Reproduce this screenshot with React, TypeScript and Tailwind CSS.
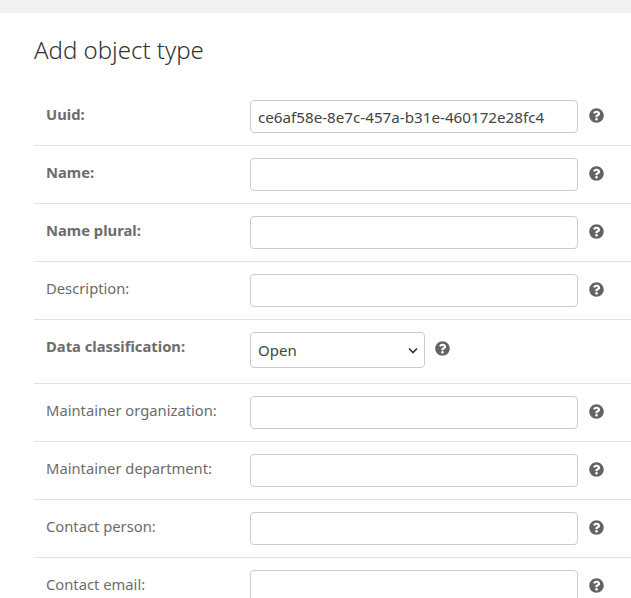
import React from 'react';
import { FaQuestionCircle } from 'react-icons/fa';

const fields = [
  { label: 'Uuid:', required: true, value: 'ce6af58e-8e7c-457a-b31e-460172e28fc4' },
  { label: 'Name:', required: true },
  { label: 'Name plural:', required: true },
  { label: 'Description:' },
  { label: 'Data classification:', required: true, select: true },
  { label: 'Maintainer organization:' },
  { label: 'Maintainer department:' },
  { label: 'Contact person:' },
  { label: 'Contact email:' },
];

function Help() {
  return <FaQuestionCircle className="w-[15px] h-[15px] text-[#636363] shrink-0" />;
}

function Row({ field }: { field: (typeof fields)[number] }) {
  return (
    <div className="flex border-b border-[#e2e2e2] pl-3 py-3">
      <label
        className={
          'w-[204px] shrink-0 pt-[4px] text-[14.75px] leading-[20px] text-[#6c6c6c] ' +
          (field.required ? 'font-bold' : '')
        }
      >
        {field.label}
      </label>
      {field.select ? (
        <div className="flex items-start gap-[10px] pb-[3px]">
          <div className="w-[175px] h-[36px] border border-[#cccccc] rounded-[4px] flex items-center justify-between pl-[7px] pr-[6px] text-[15px] text-[#444444]">
            <span>Open</span>
            <svg width="10" height="7" viewBox="0 0 10 7" fill="none">
              <path d="M1 1.5l4 4 4-4" stroke="#333333" strokeWidth="1.6" />
            </svg>
          </div>
          <div className="pt-[9px]">
            <Help />
          </div>
        </div>
      ) : (
        <div className="flex items-center gap-[11px]">
          <input
            readOnly
            value={field.value ?? ''}
            className="w-[328px] h-[33px] border border-[#cccccc] rounded-[4px] px-[7px] text-[15.2px] text-[#444444] outline-none bg-white"
          />
          <div className="mb-[2px]">
            <Help />
          </div>
        </div>
      )}
    </div>
  );
}

export default function App() {
  return (
    <div className="h-[598px] overflow-hidden bg-white font-['Noto_Sans','Open_Sans',sans-serif]">
      <div className="h-[13px] bg-[#f2f2f2]" />
      <div className="pl-[34px]">
        <h1 className="pt-[20px] h-[75px] text-[24px] leading-[33px] font-light text-[#333333]">
          Add object type
        </h1>
        {fields.map(f => (
          <Row key={f.label} field={f} />
        ))}
      </div>
    </div>
  );
}
